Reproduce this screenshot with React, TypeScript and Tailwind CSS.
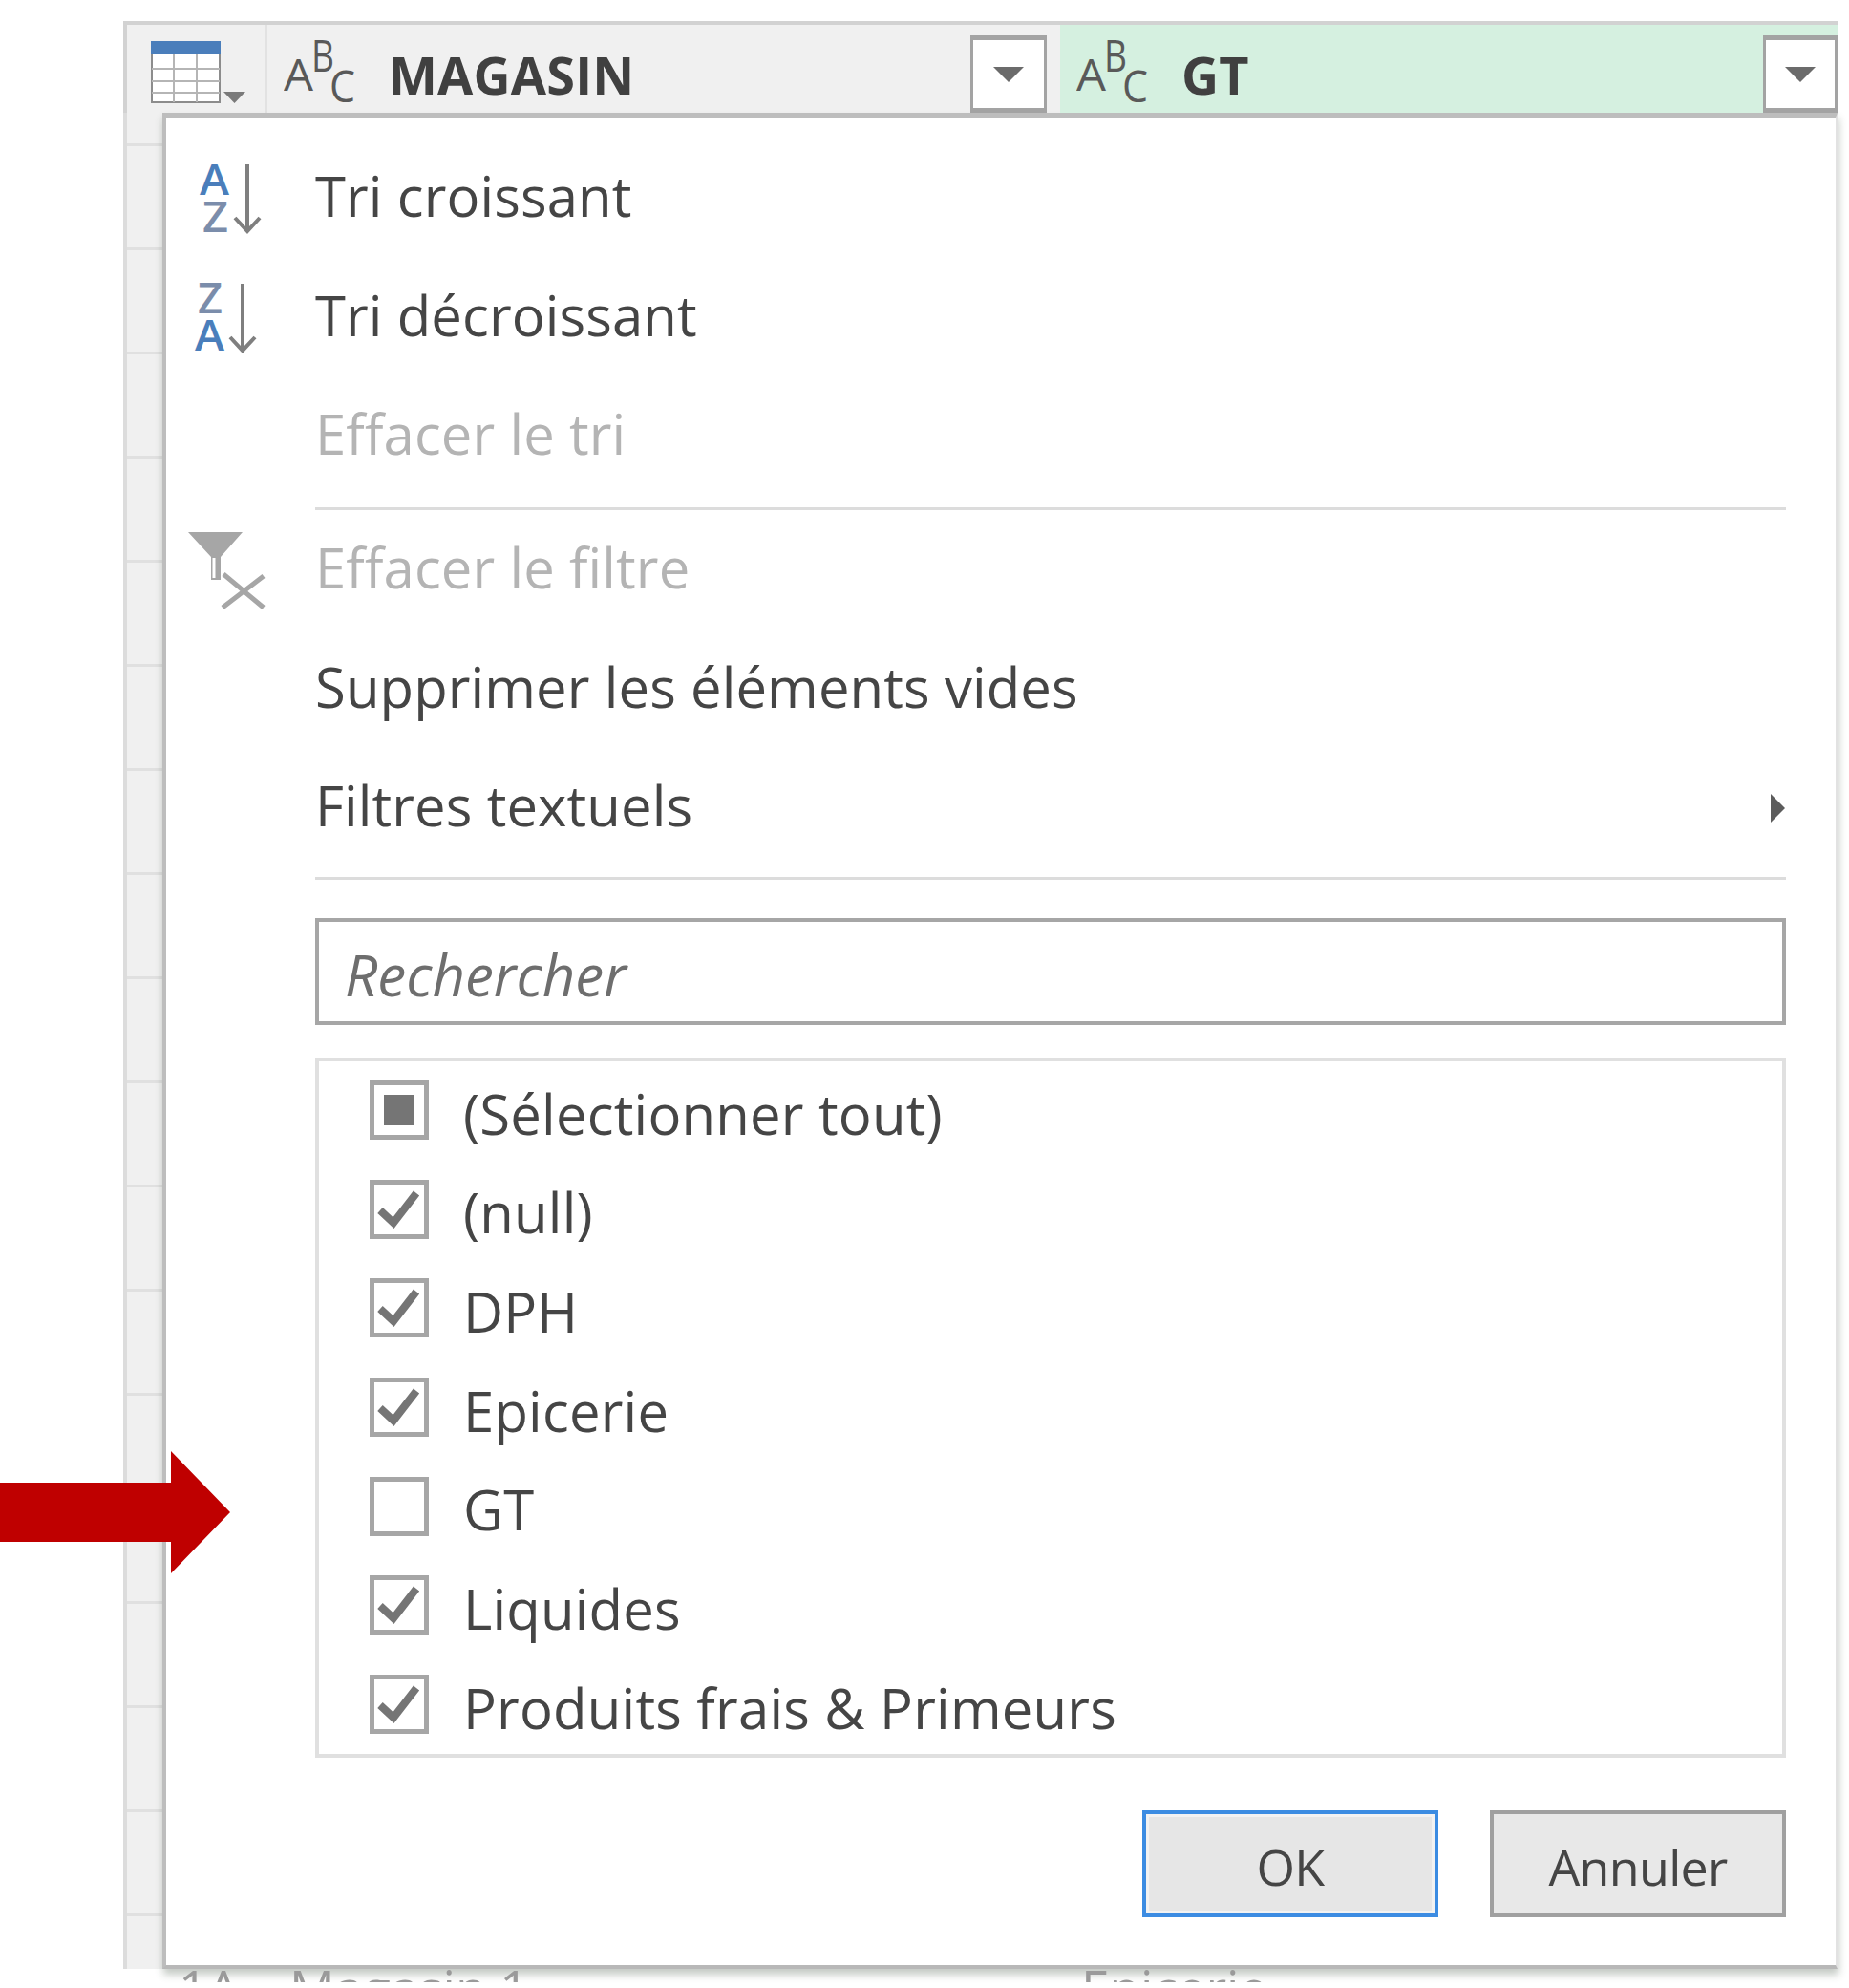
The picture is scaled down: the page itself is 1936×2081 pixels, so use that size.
import React from 'react';

const font = "font-['Open_Sans','Noto_Sans',sans-serif]";

const TypeIcon = ({ x }: { x: number }) => (
    <svg className="shrink-0" width="80" height="72" viewBox={`${x} 42 80 72`}>
        <g fill="#595959" fontFamily="Open Sans" fontSize="46">
            <text x={x} y="95" textLength="31" lengthAdjust="spacingAndGlyphs">A</text>
            <text x={x + 29} y="75" textLength="24" lengthAdjust="spacingAndGlyphs">B</text>
            <text x={x + 48} y="107" textLength="27" lengthAdjust="spacingAndGlyphs">C</text>
        </g>
    </svg>
);

const DropButton = ({ className }: { className: string }) => (
    <div className={`h-[81px] bg-white border-x-[3px] border-y-[5px] border-[#a3a3a3] flex items-center justify-center ${className}`}>
        <svg width="34" height="18" viewBox="0 0 34 18"><path d="M1 1h32L17 17z" fill="#6b6b6b" /></svg>
    </div>
);

const TableIcon = () => (
    <svg width="104" height="70" viewBox="158 42 104 70">
        <rect x="159" y="44" width="71" height="63" fill="#fff" stroke="#8c8c8c" strokeWidth="2" />
        <rect x="158" y="43" width="73" height="14" fill="#4a7ebb" />
        <path d="M159 72h71M159 85h71M159 97h71M182 57v50M206 57v50" stroke="#b5b5b5" strokeWidth="2" />
        <path d="M234 96h23l-11.500 12z" fill="#7a7a7a" />
    </svg>
);

const SortAsc = () => (
    <svg width="156" height="125" viewBox="174 145 156 125">
        <g fontFamily="Open Sans" fontSize="45" fontWeight="600">
            <text x="209" y="204" fill="#4a7ebb" textLength="31" lengthAdjust="spacingAndGlyphs">A</text>
            <text x="212" y="243" fill="#7b8dab" textLength="27" lengthAdjust="spacingAndGlyphs">Z</text>
        </g>
        <path d="M259 172v70M246 228l13 14 13-14" fill="none" stroke="#7f7f7f" strokeWidth="4" />
    </svg>
);

const SortDesc = () => (
    <svg width="156" height="124" viewBox="174 270 156 124">
        <g fontFamily="Open Sans" fontSize="45" fontWeight="600">
            <text x="207" y="328" fill="#7b8dab" textLength="26" lengthAdjust="spacingAndGlyphs">Z</text>
            <text x="204" y="367" fill="#4a7ebb" textLength="31" lengthAdjust="spacingAndGlyphs">A</text>
        </g>
        <path d="M254 297v70M241 353l13 14 13-14" fill="none" stroke="#7f7f7f" strokeWidth="4" />
    </svg>
);

const ClearFilter = () => (
    <svg width="156" height="125" viewBox="174 535 156 125">
        <path d="M197 558h57l-23 26v24h-10v-24z" fill="#a6a6a6" />
        <path d="M224 585v21" stroke="#fff" strokeWidth="3" />
        <path d="M234 602l42 35M276 604l-43 33" fill="none" stroke="#a6a6a6" strokeWidth="5" />
    </svg>
);

const MenuRow = ({ label, icon, muted, sub, height }: { label: string; icon?: React.ReactNode; muted?: boolean; sub?: boolean; height: string }) => (
    <div className={`flex items-center ${height}`}>
        <div className="w-[156px] h-full shrink-0">{icon}</div>
        <span className={`flex-1 mb-[5px] text-[58px] tracking-[0.1px] leading-none ${muted ? 'text-[#b4b4b4]' : 'text-[#454545]'}`}>{label}</span>
        {sub && (
            <svg width="17" height="32" viewBox="0 0 17 32"><path d="M1 1l15 15L1 31z" fill="#5c5c5c" /></svg>
        )}
    </div>
);

const items: { label: string; state: 'on' | 'off' | 'mixed' }[] = [
    { label: '(Sélectionner tout)', state: 'mixed' },
    { label: '(null)', state: 'on' },
    { label: 'DPH', state: 'on' },
    { label: 'Epicerie', state: 'on' },
    { label: 'GT', state: 'off' },
    { label: 'Liquides', state: 'on' },
    { label: 'Produits frais & Primeurs', state: 'on' },
];

const CheckRow = ({ label, state }: { label: string; state: 'on' | 'off' | 'mixed' }) => (
    <div className="flex items-center h-[62px]">
        <div className="w-[62px] h-[62px] shrink-0 border-[5px] border-[#a6a6a6] flex items-center justify-center">
            {state === 'mixed' && <div className="w-[32px] h-[32px] bg-[#757575]" />}
            {state === 'on' && (
                <svg width="52" height="52" viewBox="5 5 52 52">
                    <path d="M11 32l14 13 24-31" fill="none" stroke="#757575" strokeWidth="8" />
                </svg>
            )}
        </div>
        <span className="ml-[36px] mt-[7px] text-[58px] tracking-[0.2px] leading-none text-[#454545] whitespace-nowrap">{label}</span>
    </div>
);

const gridLines = Array.from({ length: 18 }, (_, i) => i);

export default function App() {
    return (
        <div className={`relative w-[1936px] h-[2081px] bg-white overflow-hidden ${font}`}>
            <div className="ml-[129px] mr-[12px] pt-[22px]">
                {/* en-tete des colonnes */}
                <header className="flex h-[96px] border-t-[4px] border-l-[4px] border-[#d2d2d2] bg-[#f0f0f0]">
                    <div className="w-[147px] shrink-0 border-r-[3px] border-[#e2e2e2] pl-[25px] pt-[16px]">
                        <TableIcon />
                    </div>
                    <div className="w-[830px] shrink-0 flex items-start pl-[17px] pt-[16px] relative">
                        <TypeIcon x={297} />
                        <span className="ml-[30px] text-[54px] font-bold leading-[72px] text-[#404040] tracking-[0.2px]">MAGASIN</span>
                        <DropButton className="absolute left-[736px] top-[11px] w-[80px]" />
                    </div>
                    <div className="flex-1 flex items-start pl-[17px] pt-[16px] bg-[#d5f0e0] relative">
                        <TypeIcon x={1130} />
                        <span className="ml-[30px] text-[54px] font-bold leading-[72px] text-[#404040] tracking-[0.2px]">GT</span>
                        <DropButton className="absolute right-0 top-[11px] w-[78px]" />
                    </div>
                </header>

                <div className="flex h-[1943px]">
                    {/* lignes de la table derriere le menu */}
                    <div className="w-[41px] shrink-0 border-l-[4px] border-[#dcdcdc] bg-[#f0f0f0] flex flex-col overflow-hidden">
                        <div className="h-[35px] shrink-0 border-b-[3px] border-[#e0e0e0]" />
                        {gridLines.map((i) => (
                            <div key={i} className="h-[109px] shrink-0 border-b-[3px] border-[#e0e0e0]" />
                        ))}
                    </div>
                    {/* menu de filtre */}
                    <div className="flex-1 bg-white border-t-[5px] border-b-[4px] border-l-[4px] border-r-[2px] border-t-[#bdbdbd] border-b-[#b8b8b8] border-l-[#bdbdbd] border-r-[#e2e2e2] pr-[52px] pt-[22px] shadow-[1px_6px_8px_rgba(60,80,60,0.3)]">
                        <MenuRow label="Tri croissant" icon={<SortAsc />} height="h-[125px]" />
                        <MenuRow label="Tri décroissant" icon={<SortDesc />} height="h-[124px]" />
                        <MenuRow label="Effacer le tri" muted height="h-[125px]" />
                        <div className="ml-[156px] mt-[12px] h-[3px] bg-[#dcdcdc]" />
                        <MenuRow label="Effacer le filtre" muted icon={<ClearFilter />} height="h-[125px]" />
                        <MenuRow label="Supprimer les éléments vides" height="h-[125px]" />
                        <MenuRow label="Filtres textuels" sub height="h-[123px]" />
                        <div className="ml-[156px] mt-[11px] h-[3px] bg-[#dcdcdc]" />

                        <div className="ml-[156px] mt-[40px] h-[112px] border-[4px] border-[#a6a6a6] flex items-center pl-[27px]">
                            <span className="mt-[5px] text-[60px] italic leading-none text-[#6e6e6e]">Rechercher</span>
                        </div>

                        <div className="ml-[156px] mt-[34px] h-[733px] border-[4px] border-[#e0e0e0] pl-[53px] pt-[20px] flex flex-col gap-[41.7px]">
                            {items.map((it) => (
                                <CheckRow key={it.label} label={it.label} state={it.state} />
                            ))}
                        </div>

                        <div className="mt-[55px] flex justify-end gap-[54px]">
                            <button className="w-[310px] h-[112px] border-[4px] border-[#3c8ce2] bg-[#e6e6e6] shadow-[inset_0_0_0_3px_#f2f2f2] pt-[5px] text-[52px] leading-none text-[#454545] tracking-[-0.7px]">OK</button>
                            <button className="w-[310px] h-[112px] border-[4px] border-[#a0a0a0] bg-[#e8e8e8] pt-[5px] text-[52px] leading-none text-[#454545] tracking-[-0.7px]">Annuler</button>
                        </div>
                    </div>
                </div>

                {/* ligne coupee sous le menu */}
                <div className="h-[14px] overflow-hidden flex items-start text-[53px] leading-[40px] text-[#9a9a9a]">
                    <span className="ml-[58px] w-[116px]">1A</span>
                    <span className="w-[829px]">Magasin 1</span>
                    <span>Epicerie</span>
                </div>
            </div>

            <svg className="absolute left-0 top-[1519px]" width="242" height="128" viewBox="0 0 242 128">
                <path d="M0 33h179V0l62 64-62 64V95H0z" fill="#bf0000" />
            </svg>
        </div>
    );
}
